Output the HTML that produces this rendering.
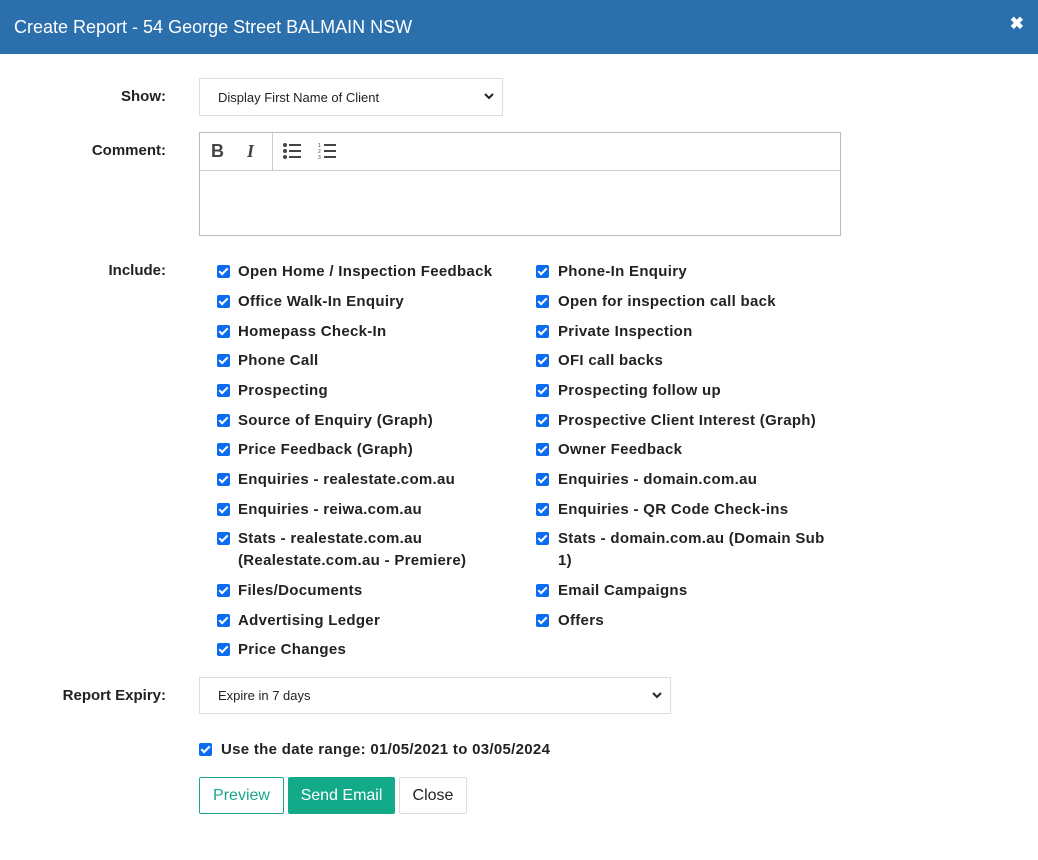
<!DOCTYPE html>
<html><head><style>
*{box-sizing:border-box;margin:0;padding:0}
body{width:1038px;height:860px;background:#fff;font-family:"Liberation Sans",sans-serif;color:#222;position:relative;overflow:hidden}
.hd{position:absolute;left:0;top:0;width:1038px;height:54px;background:#2b6fac;color:#fff;font-size:18px;padding:17px 0 0 14px}
.x{position:absolute;right:14px;top:14px;font-size:17px;font-weight:bold}
.lbl{position:absolute;font-size:15px;font-weight:bold;text-align:right;width:166px;left:0}
.sel{position:absolute;border:1px solid #ddd;font-size:13px;padding-left:18px;display:flex;align-items:center}
.sel svg{position:absolute;right:8px;top:50%;margin-top:-4px}
.cb{position:absolute;width:13px;height:13px;background:#0b6cf0;border-radius:2px}
.cb:after{content:"";position:absolute;left:4px;top:1px;width:3px;height:7px;border:solid #fff;border-width:0 2px 2px 0;transform:rotate(45deg)}
.it{position:absolute;font-size:15px;font-weight:bold;line-height:22px;width:280px;letter-spacing:0.3px;margin-top:2px}
.btn{position:absolute;top:777px;height:37px;font-size:16px;display:flex;align-items:center;justify-content:center;border-radius:2px}
</style></head><body>
<div class="hd">Create Report - 54 George Street BALMAIN NSW<span class="x">✖</span></div>

<div class="lbl" style="top:88px">Show:</div>
<div class="sel" style="left:199px;top:78px;width:304px;height:38px">Display First Name of Client<svg width="10" height="7" viewBox="0 0 10 7"><path d="M1 1l4 4 4-4" stroke="#222" stroke-width="2" fill="none"/></svg></div>

<div class="lbl" style="top:142px">Comment:</div>
<div style="position:absolute;left:199px;top:132px;width:642px;height:104px;border:1px solid #bbb"></div>
<div style="position:absolute;left:200px;top:170px;width:640px;height:1px;background:#ccc"></div>
<div style="position:absolute;left:272px;top:133px;width:1px;height:37px;background:#ccc"></div>
<div style="position:absolute;left:211px;top:141px;font-size:18px;font-weight:bold;color:#444">B</div>
<div style="position:absolute;left:247px;top:141px;font-size:18px;font-weight:bold;font-style:italic;font-family:'Liberation Serif',serif;color:#444">I</div>
<svg style="position:absolute;left:282px;top:142px" width="20" height="18"><g fill="#444"><circle cx="3" cy="3" r="2"/><circle cx="3" cy="9" r="2"/><circle cx="3" cy="15" r="2"/><rect x="7" y="2" width="12" height="2"/><rect x="7" y="8" width="12" height="2"/><rect x="7" y="14" width="12" height="2"/></g></svg>
<svg style="position:absolute;left:318px;top:142px" width="20" height="18"><g fill="#444"><rect x="6" y="2" width="12" height="2"/><rect x="6" y="8" width="12" height="2"/><rect x="6" y="14" width="12" height="2"/><text x="0" y="5" font-size="5" font-family="Liberation Sans">1</text><text x="0" y="11" font-size="5" font-family="Liberation Sans">2</text><text x="0" y="17" font-size="5" font-family="Liberation Sans">3</text></g></svg>

<div class="lbl" style="top:262px">Include:</div>

<div class="cb" style="left:217px;top:265px"></div><div class="it" style="left:238px;top:259px">Open Home / Inspection Feedback</div>
<div class="cb" style="left:217px;top:295px"></div><div class="it" style="left:238px;top:289px">Office Walk-In Enquiry</div>
<div class="cb" style="left:217px;top:325px"></div><div class="it" style="left:238px;top:319px">Homepass Check-In</div>
<div class="cb" style="left:217px;top:354px"></div><div class="it" style="left:238px;top:348px">Phone Call</div>
<div class="cb" style="left:217px;top:384px"></div><div class="it" style="left:238px;top:378px">Prospecting</div>
<div class="cb" style="left:217px;top:414px"></div><div class="it" style="left:238px;top:408px">Source of Enquiry (Graph)</div>
<div class="cb" style="left:217px;top:443px"></div><div class="it" style="left:238px;top:437px">Price Feedback (Graph)</div>
<div class="cb" style="left:217px;top:473px"></div><div class="it" style="left:238px;top:467px">Enquiries - realestate.com.au</div>
<div class="cb" style="left:217px;top:503px"></div><div class="it" style="left:238px;top:497px">Enquiries - reiwa.com.au</div>
<div class="cb" style="left:217px;top:532px"></div><div class="it" style="left:238px;top:526px;width:260px">Stats - realestate.com.au (Realestate.com.au - Premiere)</div>
<div class="cb" style="left:217px;top:584px"></div><div class="it" style="left:238px;top:578px">Files/Documents</div>
<div class="cb" style="left:217px;top:614px"></div><div class="it" style="left:238px;top:608px">Advertising Ledger</div>
<div class="cb" style="left:217px;top:643px"></div><div class="it" style="left:238px;top:637px">Price Changes</div>

<div class="cb" style="left:536px;top:265px"></div><div class="it" style="left:558px;top:259px">Phone-In Enquiry</div>
<div class="cb" style="left:536px;top:295px"></div><div class="it" style="left:558px;top:289px">Open for inspection call back</div>
<div class="cb" style="left:536px;top:325px"></div><div class="it" style="left:558px;top:319px">Private Inspection</div>
<div class="cb" style="left:536px;top:354px"></div><div class="it" style="left:558px;top:348px">OFI call backs</div>
<div class="cb" style="left:536px;top:384px"></div><div class="it" style="left:558px;top:378px">Prospecting follow up</div>
<div class="cb" style="left:536px;top:414px"></div><div class="it" style="left:558px;top:408px">Prospective Client Interest (Graph)</div>
<div class="cb" style="left:536px;top:443px"></div><div class="it" style="left:558px;top:437px">Owner Feedback</div>
<div class="cb" style="left:536px;top:473px"></div><div class="it" style="left:558px;top:467px">Enquiries - domain.com.au</div>
<div class="cb" style="left:536px;top:503px"></div><div class="it" style="left:558px;top:497px">Enquiries - QR Code Check-ins</div>
<div class="cb" style="left:536px;top:532px"></div><div class="it" style="left:558px;top:526px;width:270px">Stats - domain.com.au (Domain Sub 1)</div>
<div class="cb" style="left:536px;top:584px"></div><div class="it" style="left:558px;top:578px">Email Campaigns</div>
<div class="cb" style="left:536px;top:614px"></div><div class="it" style="left:558px;top:608px">Offers</div>

<div class="lbl" style="top:687px">Report Expiry:</div>
<div class="sel" style="left:199px;top:677px;width:472px;height:37px">Expire in 7 days<svg width="10" height="7" viewBox="0 0 10 7"><path d="M1 1l4 4 4-4" stroke="#222" stroke-width="2" fill="none"/></svg></div>

<div class="cb" style="left:199px;top:743px"></div>
<div class="it" style="left:221px;top:737px;width:400px">Use the date range: 01/05/2021 to 03/05/2024</div>

<div class="btn" style="left:199px;width:85px;border:1px solid #1aa58a;color:#1aa58a">Preview</div>
<div class="btn" style="left:288px;width:107px;background:#13aa8a;color:#fff">Send Email</div>
<div class="btn" style="left:399px;width:68px;border:1px solid #ddd;color:#222">Close</div>
</body></html>
